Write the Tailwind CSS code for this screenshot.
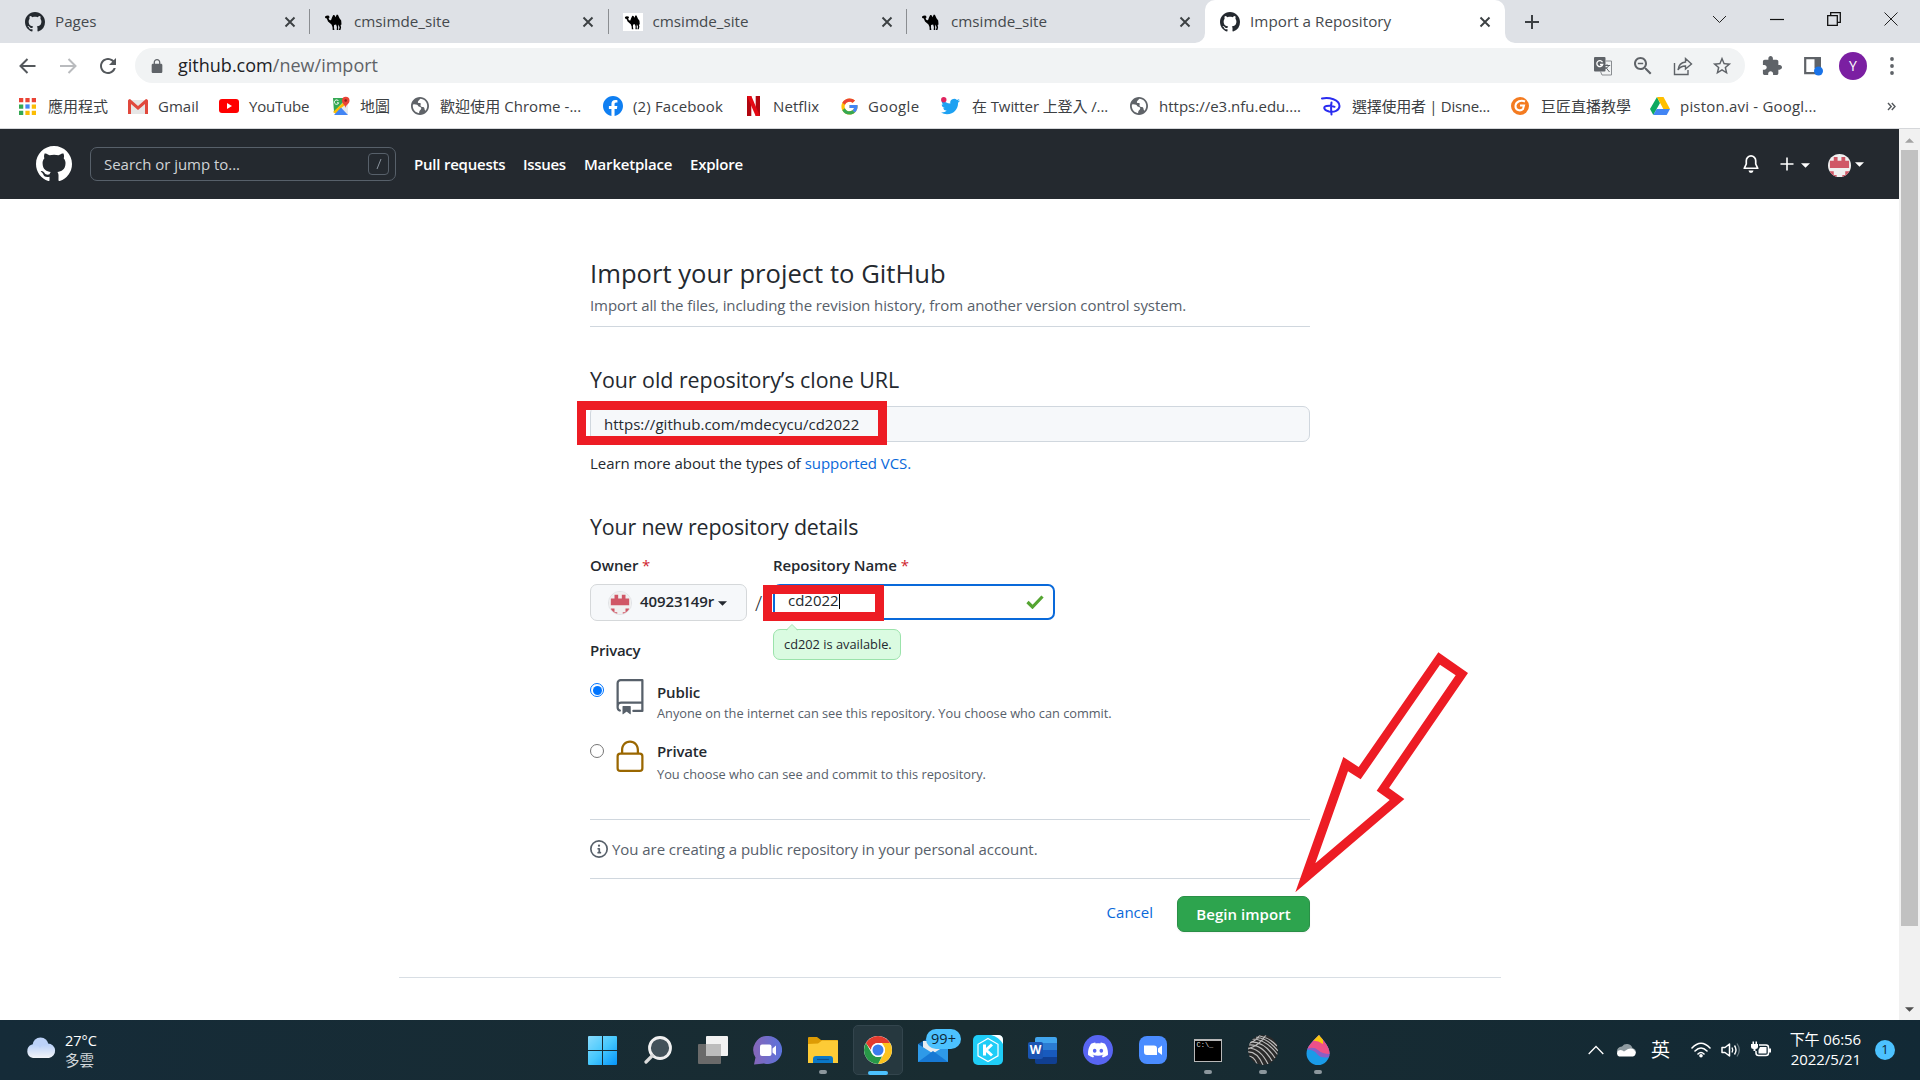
<!DOCTYPE html>
<html lang="zh-Hant">
<head>
<meta charset="utf-8">
<title>Import a Repository</title>
<script src="https://cdn.jsdelivr.net/npm/@tailwindcss/browser@4"></script>
</head>
<body class="relative h-[1080px] w-[1920px] overflow-hidden bg-white font-['Open_Sans','Noto_Sans_CJK_TC',sans-serif] text-[#24292f]">

<!-- Shared symbols -->
<svg class="hidden">
  <symbol id="mark" viewBox="0 0 16 16"><path fill="currentColor" d="M8 0C3.58 0 0 3.58 0 8c0 3.54 2.29 6.53 5.47 7.59.4.07.55-.17.55-.38 0-.19-.01-.82-.01-1.49-2.01.37-2.53-.49-2.69-.94-.09-.23-.48-.94-.82-1.13-.28-.15-.68-.52-.01-.53.63-.01 1.08.58 1.23.82.72 1.21 1.87.87 2.33.66.07-.52.28-.87.51-1.07-1.78-.2-3.64-.89-3.64-3.95 0-.87.31-1.59.82-2.15-.08-.2-.36-1.02.08-2.12 0 0 .67-.21 2.2.82.64-.18 1.32-.27 2-.27.68 0 1.36.09 2 .27 1.53-1.04 2.2-.82 2.2-.82.44 1.1.16 1.92.08 2.12.51.56.82 1.27.82 2.15 0 3.07-1.87 3.75-3.65 3.95.29.25.54.73.54 1.48 0 1.07-.01 1.93-.01 2.2 0 .21.15.46.55.38A8.013 8.013 0 0016 8c0-4.42-3.58-8-8-8z"/></symbol>
  <symbol id="x" viewBox="0 0 12 12"><path d="M1.5 1.5l9 9M10.5 1.5l-9 9" stroke="#3c4043" stroke-width="1.9" fill="none"/></symbol>
  <symbol id="camel" viewBox="0 0 20 20"><path fill="#000" d="M1 4.500l2-1 2 .3.600 1.600-1 .6.800 2 1.600.3L8 5.500l1.200-2.500 1.400.3 1 2 1-2.600 1.300.1 1.600 3.500 1.700 2.300.3 4-.9.500.5 2.300-.7 2.600h-1.500l.7-2.800-1.300-2.600-.2 2.700.2 2.700h-1.600l.2-3-.8-2.500-2 .4-.2 2.300.5 2.800H8.700l-.2-3-1-2.600L4 9.500 2.800 6.600 1.200 6z"/></symbol>
  <symbol id="globe" viewBox="2 2 20 20"><path fill="#5f6368" d="M12 2C6.480 2 2 6.480 2 12s4.480 10 10 10 10-4.480 10-10S17.520 2 12 2zm-1 17.930c-3.950-.49-7-3.850-7-7.930 0-.62.08-1.210.21-1.790L5.500 10c3 .1 4 .6 4.500 2 .4 1 2 .8 3 1.600.8.8.2 2-.6 2.800-.8.8-1.400 1.600-1.400 3.530zM20 12c0 2-.7 3.800-1.900 5.200-1.500-.7-.6-2.700-1.900-3.700-.9-.7-2.700-.3-3.400-1.300-.8-1.200.7-2.400-.3-3.200-.8-.6-1.900.2-2.700-.6-.9-1 .8-2.600 2.600-4.400C16.800 4.200 20 7.700 20 12z"/></symbol>
  <symbol id="identicon" viewBox="0 0 24 24"><rect width="24" height="24" fill="#f0f0f0"/><g fill="#d05766"><path d="M2 7h4V3h4v4h4V3h4v4h4v7.500H2z"/><path d="M2 18h4v4h3v3H2zM22 18h-4v4h-3v3h7z"/></g></symbol>
  <symbol id="caret" viewBox="0 0 10 5"><path fill="currentColor" d="M0 0h10L5 5z"/></symbol>
</svg>

<div class="flex h-full flex-col">

<!-- Tab strip -->
<div class="flex h-[43px] shrink-0 bg-[#dee1e6] pl-[11px] text-[15.2px] text-[#45494d]">
  <div class="flex w-[299px] items-center pl-3.5">
    <svg class="size-5 text-[#24292f]"><use href="#mark"/></svg>
    <span class="ml-2.5 w-[229px]">Pages</span><svg class="size-3"><use href="#x"/></svg>
    <i class="ml-auto h-[25px] w-px bg-[#8a8d91]"></i>
  </div>
  <div class="flex w-[298.5px] items-center pl-3.5">
    <svg class="size-5"><use href="#camel"/></svg>
    <span class="ml-2.5 w-[228px]">cmsimde_site</span><svg class="size-3"><use href="#x"/></svg>
    <i class="ml-auto h-[25px] w-px bg-[#8a8d91]"></i>
  </div>
  <div class="flex w-[298.5px] items-center pl-3.5">
    <svg class="h-[18px] w-5 bg-white"><use href="#camel"/></svg>
    <span class="ml-2.5 w-[228px]">cmsimde_site</span><svg class="size-3"><use href="#x"/></svg>
    <i class="ml-auto h-[25px] w-px bg-[#8a8d91]"></i>
  </div>
  <div class="flex w-[298px] items-center pl-3.5">
    <svg class="size-5"><use href="#camel"/></svg>
    <span class="ml-2.5 w-[228px]">cmsimde_site</span><svg class="size-3"><use href="#x"/></svg>
  </div>
  <div class="relative flex w-[300px] items-center rounded-t-[10px] bg-white pl-[15px]">
    <svg class="absolute bottom-0 -left-2.5 size-2.5"><path fill="#fff" d="M10 0v10H0A10 10 0 0010 0z"/></svg>
    <svg class="absolute -right-2.5 bottom-0 size-2.5"><path fill="#fff" d="M0 0v10h10A10 10 0 010 0z"/></svg>
    <svg class="size-5 text-[#24292f]"><use href="#mark"/></svg>
    <span class="ml-2.5 w-[229px] tracking-[0.04px]">Import a Repository</span><svg class="size-3"><use href="#x"/></svg>
  </div>
  <div class="flex flex-1 items-center pl-[19px]">
    <svg class="size-4" viewBox="0 0 16 16"><path d="M8 1v14M1 8h14" stroke="#3c4043" stroke-width="2"/></svg>
    <svg class="-mt-1.5 ml-[172px] h-3.5 w-[15px]" viewBox="0 0 15 14"><path d="M1 4l6.500 6.500L14 4" fill="none" stroke="#222"/></svg>
    <svg class="-mt-1.5 ml-[43px] size-3.5" viewBox="0 0 14 14"><path d="M0 7.500h14" stroke="#111" stroke-width="1.200"/></svg>
    <svg class="-mt-1.5 ml-[43px] size-3.5" viewBox="0 0 14 14"><path d="M.7 3.700h9.600v9.600H.7zM3.700 3.700v-3h9.600v9.600h-3" fill="none" stroke="#111" stroke-width="1.300"/></svg>
    <svg class="-mt-1.5 ml-[43px] size-3.5" viewBox="0 0 14 14"><path d="M.5.500l13 13M13.500.500l-13 13" stroke="#222"/></svg>
  </div>
</div>

<!-- Toolbar -->
<div class="flex h-[45px] shrink-0 items-center pl-[19px]">
  <svg class="h-4 w-[17px]" viewBox="0 0 17 16"><path d="M16.500 8H1.500M8.500 1L1.500 8l7 7" fill="none" stroke="#54585c" stroke-width="2"/></svg>
  <svg class="ml-6 h-4 w-[17px]" viewBox="0 0 17 16"><path d="M0 8h15.500M8.500 1l7 7-7 7" fill="none" stroke="#b9bbbe" stroke-width="2"/></svg>
  <svg class="ml-[19px] size-6" viewBox="0 0 24 24"><path fill="#54585c" d="M17.650 6.350C16.200 4.900 14.210 4 12 4c-4.420 0-7.990 3.580-7.990 8s3.570 8 7.990 8c3.730 0 6.840-2.550 7.730-6h-2.080c-.82 2.330-3.040 4-5.650 4-3.310 0-6-2.690-6-6s2.690-6 6-6c1.660 0 3.140.69 4.220 1.780L13 11h7V4l-2.350 2.350z"/></svg>
  <div class="ml-[15px] flex h-[35px] w-[1610px] items-center rounded-full bg-[#f1f3f4] pl-[15px]">
    <svg class="h-3.5 w-3.5" viewBox="2 1 20 21"><path fill="#5f6368" fill-rule="evenodd" d="M18 8h-1V6c0-2.760-2.240-5-5-5S7 3.240 7 6v2H6c-1.100 0-2 .9-2 2v10c0 1.100.9 2 2 2h12c1.100 0 2-.9 2-2V10c0-1.100-.9-2-2-2zM15.100 8H8.900V6c0-1.710 1.390-3.100 3.100-3.100s3.100 1.390 3.100 3.100v2z"/></svg>
    <span class="ml-3.5 w-[1415px] text-[18px] tracking-[0.01px] text-[#5f6368]"><span class="text-[#202124]">github.com</span>/new/import</span>
    <svg class="size-5" viewBox="0 0 20 20"><rect x="1" y="1" width="11.500" height="14.500" rx="1" fill="#5f6368"/><path d="M12.500 5H18.500v14H9l-1.500-3.500" fill="none" stroke="#8a8d91"/><path d="M9.500 6.200A3 3 0 109.700 8.500H7" fill="none" stroke="#fff" stroke-width="1.300"/><path d="M10.800 9.500h6.400M14 8.200v1.300M12 12.500q3-.5 3.800-3M12.500 11l4 5" fill="none" stroke="#5f6368"/></svg>
    <svg class="ml-[18px] size-6" viewBox="0 0 24 24"><path fill="#5f6368" d="M15.500 14h-.79l-.28-.27C15.410 12.590 16 11.110 16 9.500 16 5.910 13.090 3 9.500 3S3 5.910 3 9.500 5.910 16 9.500 16c1.610 0 3.090-.59 4.230-1.570l.27.28v.79l5 4.990L20.490 19l-4.990-5zm-6 0C7.010 14 5 11.990 5 9.500S7.010 5 9.500 5 14 7.010 14 9.500 11.990 14 9.500 14zM6.800 8.700h5.400v1.500H6.800z"/></svg>
    <svg class="ml-[18px] size-5" viewBox="0 0 20 20"><path d="M1.500 7v11.500h13.500V14M12.500 2.500l6 5.500-6 5V10c-4 0-6 1.300-7.500 4 .5-4.500 3-7.500 7.500-8z" fill="none" stroke="#5f6368" stroke-width="1.400"/></svg>
    <svg class="ml-[18px] size-[22px]" viewBox="0 0 24 24"><path fill="#5f6368" d="M22 9.240l-7.190-.62L12 2 9.190 8.630 2 9.240l5.460 4.730L5.820 21 12 17.270 18.180 21l-1.630-7.030L22 9.240zM12 15.400l-3.760 2.270 1-4.280-3.320-2.880 4.380-.38L12 6.100l1.710 4.040 4.380.38-3.320 2.880 1 4.280L12 15.400z"/></svg>
  </div>
  <svg class="ml-[17px] size-5" viewBox="1 1 22 22"><path fill="#5f6368" d="M20.500 11H19V7c0-1.100-.9-2-2-2h-4V3.500C13 2.120 11.880 1 10.500 1S8 2.120 8 3.500V5H4c-1.100 0-1.990.9-1.990 2v3.800H3.500c1.490 0 2.700 1.210 2.700 2.700s-1.210 2.700-2.700 2.700H2V20c0 1.100.9 2 2 2h3.800v-1.500c0-1.490 1.210-2.700 2.700-2.700 1.490 0 2.700 1.210 2.700 2.700V22H17c1.100 0 2-.9 2-2v-4h1.500c1.380 0 2.500-1.120 2.500-2.500S21.880 11 20.500 11z"/></svg>
  <svg class="ml-[21px] size-5" viewBox="0 0 20 20"><path d="M2.200 2.200h14.600v15H2.200z" fill="none" stroke="#5f6368" stroke-width="2.200"/><path d="M11.500 1.500H18v11h-6.500z" fill="#5f6368"/><circle cx="15.500" cy="15" r="4.500" fill="#1a73e8"/></svg>
  <div class="ml-4 flex size-7 items-center justify-center rounded-full bg-[#7b1fa2] text-sm text-white">Y</div>
  <svg class="ml-[22px] h-5 w-1.5" viewBox="0 0 6 20"><g fill="#5f6368"><circle cx="3" cy="3" r="1.900"/><circle cx="3" cy="10" r="1.900"/><circle cx="3" cy="17" r="1.900"/></g></svg>
</div>

<!-- Bookmarks bar -->
<div class="flex h-[41px] shrink-0 items-center border-b border-[#d5d7da] pb-1 pl-[19px] text-[15px] whitespace-nowrap text-[#3c4043]">
  <div class="flex w-[109px] items-center gap-3">
    <svg class="size-[17px]" viewBox="0 0 16 16"><path fill="#ea4335" d="M0 0h4v4H0zM6 0h4v4H6zM12 0h4v4h-4z"/><path fill="#34a853" d="M0 6h4v4H0zM0 12h4v4H0z"/><path fill="#4285f4" d="M6 6h4v4H6z"/><path fill="#fbbc04" d="M12 6h4v4h-4zM12 12h4v4h-4zM6 12h4v4H6z"/></svg>
    <span>應用程式</span></div>
  <div class="flex w-[91px] items-center gap-2.5">
    <svg class="h-[15px] w-5" viewBox="0 0 20 15"><path fill="#e6e6e6" d="M2 1h16v14H2z"/><path fill="#e0483c" d="M0 1.500Q.5 0 2 0l8 7 8-7q1.500 0 2 1.500V15h-3V5l-7 6-7-6v10H0z"/></svg>
    <span>Gmail</span></div>
  <div class="flex w-28 items-center gap-2.5">
    <svg class="h-3.5 w-5" viewBox="0 0 20 14"><rect width="20" height="14" rx="3" fill="#f00"/><path fill="#fff" d="M8 4l5 3-5 3z"/></svg>
    <span class="tracking-[-0.2px]">YouTube</span></div>
  <div class="flex w-20 items-center gap-[9px]">
    <svg class="size-5" viewBox="0 0 20 20"><path fill="#34a853" d="M2 2h14L3 16z"/><path fill="#fbbc04" d="M16 3l1 4L5 18l-3-2z"/><path fill="#e8eaed" d="M17 7v12L10 12z"/><path fill="#4285f4" d="M10 11.500l7 7.500H3z"/><path fill="#ea4335" d="M14.500 12C14 8.500 11 8 11 4.500a3.700 3.700 0 017.500 0c0 3.500-3.500 4-4 7.500z"/><circle cx="14.700" cy="4.500" r="1.300" fill="#8c1d18"/><path d="M7.500 5A2.200 2.200 0 107.700 6.800H6" fill="none" stroke="#fff"/></svg>
    <span>地圖</span></div>
  <div class="flex w-48 items-center gap-[11px]">
    <svg class="size-[18px]"><use href="#globe"/></svg><span class="tracking-[0.05px]">歡迎使用 Chrome -...</span></div>
  <div class="flex w-[144px] items-center gap-2.5">
    <svg class="size-5" viewBox="0 0 24 24"><circle cx="12" cy="12" r="11.500" fill="#fff"/><path fill="#0f7ff2" d="M24 12.073c0-6.627-5.373-12-12-12s-12 5.373-12 12c0 5.990 4.388 10.954 10.125 11.854v-8.385H7.078v-3.470h3.047V9.430c0-3.007 1.792-4.669 4.533-4.669 1.312 0 2.686.235 2.686.235v2.953H15.830c-1.491 0-1.956.925-1.956 1.874v2.250h3.328l-.532 3.470h-2.796v8.385C19.612 23.027 24 18.062 24 12.073z"/></svg>
    <span class="tracking-[0.15px]">(2) Facebook</span></div>
  <div class="flex w-[94px] items-center gap-[13px]">
    <svg class="h-5 w-[13px]" viewBox="0 0 13 20"><path fill="#b1060f" d="M0 0h4.300v20H0zM8.700 0H13v20H8.700z"/><path fill="#e50914" d="M0 0h4.300L13 20H8.700z"/></svg>
    <span class="tracking-[0.1px]">Netflix</span></div>
  <div class="flex w-[100px] items-center gap-2.5">
    <svg class="size-[17px]" viewBox="3 3 42 42"><path fill="#FFC107" d="M43.611,20.083H42V20H24v8h11.303c-1.649,4.657-6.080,8-11.303,8c-6.627,0-12-5.373-12-12c0-6.627,5.373-12,12-12c3.059,0,5.842,1.154,7.961,3.039l5.657-5.657C34.046,6.053,29.268,4,24,4C12.955,4,4,12.955,4,24c0,11.045,8.955,20,20,20c11.045,0,20-8.955,20-20C44,22.659,43.862,21.350,43.611,20.083z"/><path fill="#ea4335" d="M6.306,14.691l6.571,4.819C14.655,15.108,18.961,12,24,12c3.059,0,5.842,1.154,7.961,3.039l5.657-5.657C34.046,6.053,29.268,4,24,4C16.318,4,9.656,8.337,6.306,14.691z"/><path fill="#34a853" d="M24,44c5.166,0,9.860-1.977,13.409-5.192l-6.190-5.238C29.211,35.091,26.715,36,24,36c-5.202,0-9.619-3.317-11.283-7.946l-6.522,5.025C9.505,39.556,16.227,44,24,44z"/><path fill="#4285f4" d="M43.611,20.083H42V20H24v8h11.303c-0.792,2.237-2.231,4.166-4.087,5.571l6.193,5.236C36.971,39.205,44,34,44,24C44,22.659,43.862,21.350,43.611,20.083z"/></svg>
    <span class="tracking-[0.35px]">Google</span></div>
  <div class="flex w-[189px] items-center gap-3">
    <svg class="h-[19px] w-[19px]" viewBox="0 0 24 24"><path fill="#1da1f2" d="M23.953 4.570a10 10 0 01-2.825.775 4.958 4.958 0 002.163-2.723c-.951.555-2.005.959-3.127 1.184a4.920 4.920 0 00-8.384 4.482C7.690 8.095 4.067 6.130 1.640 3.162a4.822 4.822 0 00-.666 2.475c0 1.710.87 3.213 2.188 4.096a4.904 4.904 0 01-2.228-.616v.06a4.923 4.923 0 003.946 4.827 4.996 4.996 0 01-2.212.085 4.936 4.936 0 004.604 3.417 9.867 9.867 0 01-6.102 2.105c-.39 0-.779-.023-1.170-.067a13.995 13.995 0 007.557 2.209c9.053 0 13.998-7.496 13.998-13.985 0-.21 0-.42-.015-.63A9.935 9.935 0 0024 4.590z"/><circle cx="3.500" cy="3.500" r="3.400" fill="#e0245e"/></svg>
    <span class="tracking-[-0.1px]">在 Twitter 上登入 /...</span></div>
  <div class="flex w-[191px] items-center gap-[11px]">
    <svg class="size-[18px]"><use href="#globe"/></svg><span>https://e3.nfu.edu....</span></div>
  <div class="flex w-[189px] items-center gap-[11px]">
    <svg class="size-5" viewBox="0 0 20 20"><path d="M1 2.500C8 1 18.500 3.500 18.500 10 18.500 14.500 13 16.500 8 15.500 2.500 14 2 10.800 5.500 10q4-1 8 .8M10.500 6.500q-.8 5 0 12" fill="none" stroke="#2a2cf0" stroke-width="2" stroke-linecap="round"/></svg>
    <span class="tracking-[-0.28px]">選擇使用者 | Disne...</span></div>
  <div class="flex w-[140px] items-center gap-[11px]">
    <svg class="size-5" viewBox="0 0 20 20"><ellipse cx="10" cy="10" rx="9" ry="9" fill="#f47b20"/><path d="M15 5.500c-4-2-9 0-9.500 4-.5 5 5 6 7.500 3.500l1-3.500H10" fill="none" stroke="#fff" stroke-width="2"/></svg>
    <span>巨匠直播教學</span></div>
  <div class="flex w-[237px] items-center gap-2.5">
    <svg class="h-[18px] w-5" viewBox="0 0 20 18"><path fill="#0da960" d="M7 0L0 12l3.300 6L10 6z"/><path fill="#ffbf00" d="M7 0h6.500L20 12h-6.700z"/><path fill="#4285f4" d="M3.300 18L6.600 12H20l-3.300 6z"/></svg>
    <span class="tracking-[0.2px]">piston.avi - Googl...</span></div>
  <svg class="size-[9px] self-center" viewBox="0 0 9 9"><path d="M1 1l3.200 3.500L1 8M4.800 1L8 4.500 4.800 8" fill="none" stroke="#54585c" stroke-width="1.400"/></svg>
</div>

<!-- Web page viewport -->
<div class="flex h-[891px] shrink-0">
 <div class="w-[1899px]">
  <header class="flex h-[70px] items-center bg-[#24292f] pl-9 text-[15px] font-semibold text-white">
    <svg class="size-9"><use href="#mark"/></svg>
    <div class="ml-[18px] flex h-[34px] w-[306px] items-center justify-between rounded-[7px] border border-[#57606a] pr-1.5 pl-[13px] font-normal tracking-[-0.03px] text-[#d0d3d6]">Search or jump to...
      <span class="flex h-[22px] w-[21px] items-center justify-center rounded-[4px] border border-[#57606a]"><svg class="h-3 w-2" viewBox="0 0 8 12"><path d="M2 11L6 1" stroke="#8b949e"/></svg></span>
    </div>
    <nav class="flex pl-[18px] whitespace-nowrap">
      <a class="w-[109px] tracking-[-0.22px]">Pull requests</a><a class="w-[61px] tracking-[-0.3px]">Issues</a><a class="w-[106px] tracking-[-0.2px]">Marketplace</a><a class="tracking-[-0.2px]">Explore</a>
    </nav>
    <svg class="ml-auto size-[18px]" viewBox="0 0 16 16"><path d="M8 .8A4.200 4.200 0 003.800 5v3L2 11.800h12L12.200 8V5A4.200 4.200 0 008 .8z" fill="none" stroke="#fff" stroke-width="1.500" stroke-linejoin="round"/><path d="M5.800 13.800h4.400a2.200 2.200 0 01-4.400 0z" fill="#fff"/></svg>
    <svg class="ml-5 size-3.5" viewBox="0 0 14 14"><path d="M7 .5v13M.5 7h13" stroke="#fff" stroke-width="1.600"/></svg>
    <svg class="mt-0.5 ml-[7px] h-[5px] w-[9px]"><use href="#caret"/></svg>
    <svg class="mt-0.5 ml-[18px] size-[23px] rounded-full"><use href="#identicon"/></svg>
    <svg class="mr-[35px] ml-1 h-[5px] w-[9px]"><use href="#caret"/></svg>
  </header>

  <main class="ml-[590px] w-[720px] pt-[55px] text-[15px] whitespace-nowrap">
    <h1 class="h-10 text-[25.6px] leading-10 tracking-[0.02px]">Import your project to GitHub</h1>
    <p class="h-8 border-b border-[#d0d7de] leading-[22px] tracking-[-0.075px] text-[#57606a] box-content">Import all the files, including the revision history, from another version control system.</p>

    <h2 class="mt-[38px] h-[30px] text-[21.4px] leading-[30px] tracking-[-0.03px]">Your old repository’s clone URL</h2>
    <div class="mt-[11px] flex h-9 items-center rounded-[7px] border border-[#d0d7de] bg-[#f6f8fa] pl-[13px] tracking-[0.03px]">https://github.com/mdecycu/cd2022</div>
    <p class="mt-2.5 h-[23px] leading-[22px] tracking-[-0.06px]">Learn more about the types of <a class="text-[#0969da]">supported VCS.</a></p>

    <h2 class="mt-[37px] h-[30px] text-[21.4px] leading-[30px] tracking-[-0.17px]">Your new repository details</h2>
    <div class="mt-3 flex h-[22px] leading-[22px] font-semibold tracking-[-0.08px]">
      <span class="w-[183px]">Owner <span class="font-normal text-[#cf222e]">*</span></span>
      <span>Repository Name <span class="font-normal text-[#cf222e]">*</span></span>
    </div>
    <div class="mt-2 flex h-[37px]">
      <div class="flex h-full w-[157px] items-center rounded-[7px] border border-[#d5d8da] bg-[#f6f8fa] pl-[17px] font-semibold">
        <svg class="mr-2 size-6 rounded-full border border-[#dfe1e4]"><use href="#identicon"/></svg><span class="-mt-0.5 tracking-[-0.1px]">40923149r</span>
        <svg class="mt-0.5 ml-1 h-[5px] w-[9px]"><use href="#caret"/></svg>
      </div>
      <span class="mt-1 ml-2 w-[18px] text-[21px] font-light">/</span>
      <div class="relative flex h-9 w-[282px] items-center rounded-[7px] border-2 border-[#0969da] bg-white pr-[9px] pl-[13px]">
        <span class="-mt-1 border-r border-black leading-[18px]">cd2022</span>
        <svg class="ml-auto h-3.5 w-[18px]" viewBox="0 0 18 14"><path d="M1.500 7l5 5L16.500 1.500" fill="none" stroke="#55a532" stroke-width="3.200"/></svg>
        <div class="absolute top-[43px] -left-[2px] flex h-[31px] w-32 items-center rounded-[7px] border border-[#9be3ab] bg-[#dafbe1] pl-2.5 text-[12.8px]">
          <svg class="absolute -top-1.5 left-3 h-[7px] w-3" viewBox="0 0 12 7"><path d="M0 7l6-6 6 6z" fill="#dafbe1"/><path d="M0 6.500L6 .5l6 6" fill="none" stroke="#9be3ab"/></svg>cd202 is available.</div>
      </div>
    </div>
    <p class="mt-[18px] h-[23px] leading-[22px] font-semibold tracking-[-0.25px]">Privacy</p>

    <div class="mt-[17px] flex h-[60px]">
      <i class="mt-1 mr-2 flex size-3.5 items-center justify-center rounded-full border border-[#0075ff]"><i class="size-[9px] rounded-full bg-[#0075ff]"></i></i>
      <svg class="size-9" viewBox="0 0 24 24"><path fill="#57606a" fill-rule="evenodd" d="M3 2.750A2.750 2.750 0 015.750 0h14.500a.75.750 0 01.75.750v20.500a.75.750 0 01-.75.750h-6a.75.750 0 010-1.500h5.250v-4H6A1.500 1.500 0 004.500 18v.75c0 .716.430 1.334 1.050 1.605a.75.750 0 01-.6 1.374A3.250 3.250 0 013 18.750v-16zM19.500 1.500V15H6c-.546 0-1.059.146-1.500.401V2.750c0-.69.560-1.250 1.250-1.250H19.500z"/><path fill="#57606a" d="M7 18.250a.25.250 0 01.25-.25h5a.25.250 0 01.25.25v5.010a.25.250 0 01-.397.201l-2.206-1.604a.25.250 0 00-.294 0L7.397 23.460a.25.250 0 01-.397-.2v-5.010z"/></svg>
      <div class="ml-[9px] pt-0.5"><p class="font-semibold leading-[22px] tracking-[-0.15px]">Public</p><p class="text-[12.8px] leading-[21px] tracking-[-0.02px] text-[#57606a]">Anyone on the internet can see this repository. You choose who can commit.</p></div>
    </div>
    <div class="flex h-[60px]">
      <i class="mt-[5px] mr-2 size-3.5 rounded-full border border-[#767676] bg-white"></i>
      <svg class="size-9" viewBox="0 0 24 24"><path fill="#9a6700" fill-rule="evenodd" d="M6 9V7.250C6 3.845 8.503 1 12 1s6 2.845 6 6.250V9h.5a2.500 2.500 0 012.500 2.500v8a2.500 2.500 0 01-2.500 2.500h-13A2.500 2.500 0 013 19.500v-8A2.500 2.500 0 015.500 9H6zm1.500-1.750C7.500 4.580 9.422 2.500 12 2.500c2.578 0 4.500 2.080 4.500 4.750V9h-9V7.250zm-3 4.250a1 1 0 011-1h13a1 1 0 011 1v8a1 1 0 01-1 1h-13a1 1 0 01-1-1v-8z"/></svg>
      <div class="ml-[9px] pt-px"><p class="h-[23px] font-semibold leading-[22px] tracking-[-0.15px]">Private</p><p class="text-[12.8px] leading-[22px] text-[#57606a]">You choose who can see and commit to this repository.</p></div>
    </div>

    <div class="mt-5 flex h-[60px] items-center gap-1 border-y border-[#d0d7de] tracking-[-0.055px] text-[#57606a]">
      <svg class="size-[18px]" viewBox="0 0 16 16"><path fill="#57606a" fill-rule="evenodd" d="M8 1.500a6.500 6.500 0 100 13 6.500 6.500 0 000-13zM0 8a8 8 0 1116 0A8 8 0 010 8zm6.500-.25A.75.750 0 017.250 7h1a.75.750 0 01.75.750v2.750h.25a.75.750 0 010 1.500h-2a.75.750 0 010-1.500h.25v-2h-.25a.75.750 0 01-.75-.75zM8 6a1 1 0 100-2 1 1 0 000 2z"/></svg>
      You are creating a public repository in your personal account.</div>
    <div class="mt-[17px] flex h-9 items-center justify-end font-semibold">
      <a class="-mt-1 mr-6 font-medium text-[#0969da]">Cancel</a>
      <div class="flex h-9 w-[133px] items-center justify-center rounded-[7px] border border-[#2a8f47] bg-[#2da44e] tracking-[0.05px] text-white shadow-xs">Begin import</div>
    </div>
  </main>
  <hr class="mt-[45px] ml-[399px] w-[1102px] border-[#d8dee4]">
 </div>
 <!-- Scrollbar -->
 <div class="flex w-[21px] flex-col items-center bg-[#f1f1f1]">
   <svg class="mt-[9px] h-[5px] w-[9px] rotate-180 text-[#a3a3a3]"><use href="#caret"/></svg>
   <div class="mt-[7px] h-[776px] w-[17px] bg-[#c1c1c1]"></div>
   <svg class="mt-auto mb-2 h-[5px] w-[9px] text-[#505050]"><use href="#caret"/></svg>
 </div>
</div>

<!-- Taskbar -->
<div class="flex h-[60px] shrink-0 items-center bg-linear-to-r from-[#152b38] via-[#192c31] to-[#122935] whitespace-nowrap text-white">
  <div class="flex w-[575px] items-center pl-[26px]">
    <svg class="-mt-1 h-[22px] w-[30px]" viewBox="0 0 30 22"><defs><linearGradient id="cl" x1="0" y1="0" x2="0" y2="1"><stop stop-color="#b6cff8"/><stop offset="1" stop-color="#f2f4f8"/></linearGradient></defs><circle cx="14.500" cy="8.500" r="8" fill="#bcd2f8"/><path fill="url(#cl)" d="M7 21a7 7 0 01-1-13.500Q11 6.500 14 11q3-5 8-4.500a7.300 7.300 0 011 14.500z"/></svg>
    <div class="mt-0.5 ml-[9px] text-[14.500px] leading-5"><p>27°C</p><p class="text-[#d3d8db]">多雲</p></div>
  </div>
  <div class="flex">
    <div class="flex h-[50px] w-[55px] items-center justify-center"><svg class="size-[29px]" viewBox="0 0 29 29"><defs><linearGradient id="wn" x1="0" y1="0" x2="1" y2="1"><stop stop-color="#89dcfd"/><stop offset=".5" stop-color="#46c8fd"/><stop offset="1" stop-color="#0595f9"/></linearGradient></defs><path fill="url(#wn)" d="M0 1q0-1 1-1h13v14H0zM15 0h13q1 0 1 1v13H15zM0 15h14v14H1q-1 0-1-1zM15 15h14v13q0 1-1 1H15z"/></svg></div>
    <div class="flex h-[50px] w-[55px] items-center justify-center"><svg class="size-7" viewBox="0 0 28 28"><circle cx="16" cy="12" r="10.500" fill="#43525a" stroke="#f0f0f0" stroke-width="2.800"/><path d="M8.500 19.500L2 26" stroke="#dcdcdc" stroke-width="3.200" stroke-linecap="round"/></svg></div>
    <div class="flex h-[50px] w-[55px] items-center justify-center"><svg class="h-7 w-[30px]" viewBox="0 0 30 28"><rect x="0" y="8" width="23" height="20" rx="1" fill="#6a6a6a"/><rect x="8" y="0" width="22" height="20" rx="1" fill="#f2f2f2"/><path d="M8 8h15v12H8z" fill="#bdbdbd"/></svg></div>
    <div class="flex h-[50px] w-[55px] items-center justify-center"><svg class="size-[29px]" viewBox="0 0 29 29"><defs><linearGradient id="tm" x1="0" x2="1"><stop stop-color="#8666b8"/><stop offset="1" stop-color="#5b73dc"/></linearGradient></defs><path fill="url(#tm)" d="M15 0a14 14 0 11-4 27.400L1 28.500l1.500-7A14 14 0 0115 0z"/><rect x="7" y="8.500" width="11.500" height="11.500" rx="2" fill="#fff"/><path fill="#fff" d="M19.500 12.500L23 9.500v10l-3.500-3z"/></svg></div>
    <div class="relative flex h-[50px] w-[55px] items-center justify-center"><svg class="h-7 w-[30px]" viewBox="0 0 30 28"><path fill="#dd9b04" d="M0 2q0-1 1-1h8l4 3h16q1 0 1 1v5H0z"/><path fill="#fdcb36" d="M0 8l10-.5 4-3h16V27H0z"/><path fill="#0a78c8" d="M5 27v-4q0-3 3-3h14q3 0 3 3v4z"/><path d="M9 23.500h12" stroke="#0b4f8f" stroke-width="1.200"/></svg><i class="absolute bottom-px h-1 w-2 rounded-full bg-[#8c979d]"></i></div>
    <div class="relative mx-[2.5px] flex h-[50px] w-[50px] items-center justify-center rounded-[5px] border border-[#33454d] bg-[#26383f]"><svg class="size-7" viewBox="0 0 28 28"><circle cx="14" cy="14" r="14" fill="#fff"/><path fill="#e33b2e" d="M1.880 7A14 14 0 0126.120 7H14a7 7 0 00-6.060 3.500L7 14z"/><path fill="#fcc31e" d="M26.120 7A14 14 0 0114 28l6.060-10.500A7 7 0 0020.060 10.500L18 7z"/><path fill="#279847" d="M14 28A14 14 0 011.880 7l6.060 10.500A7 7 0 0014 21l4-.5z"/><circle cx="14" cy="14" r="7" fill="#fff"/><circle cx="14" cy="14" r="5.500" fill="#3b7ded"/></svg><i class="absolute -bottom-px h-1 w-5 rounded-full bg-[#4cc2ff]"></i></div>
    <div class="relative flex h-[50px] w-[55px] items-center justify-center"><svg class="h-6 w-[30px]" viewBox="0 0 30 24"><path fill="#0f5fa8" d="M0 6L15-3 30 6v8H0z"/><path fill="#e9edf0" d="M5 3h20v9l-10 6L5 12z"/><path fill="#2e9ae8" d="M0 6l15 9.500L30 6v18H0z"/><path fill="#1779d4" d="M0 24L15 13l15 11z"/></svg><span class="absolute top-1 left-[21px] flex h-5 w-[35px] items-center justify-center rounded-full bg-[#4cc2ff] text-[14.500px] text-[#0c2738]">99+</span></div>
    <div class="flex h-[50px] w-[55px] items-center justify-center"><svg class="size-[30px]" viewBox="0 0 30 30"><rect width="30" height="30" rx="5" fill="#1fcdf7"/><path fill="#fff" d="M18 0h7q5 0 5 5v4q-4-7-12-9z"/><path d="M15 3.500l10 5.800v11.500l-10 5.800-10-5.800V9.300z" fill="none" stroke="#fff" stroke-width="1.200"/><path d="M11.500 9.500v11M19 9.500L13 15l6 5.500" fill="none" stroke="#fff" stroke-width="3"/></svg></div>
    <div class="flex h-[50px] w-[55px] items-center justify-center"><div class="relative flex h-[27px] w-[29px] justify-end"><div class="flex w-[22px] flex-col overflow-hidden rounded-[2px]"><i class="flex-1 bg-[#41a5ee]"></i><i class="flex-1 bg-[#2b7cd3]"></i><i class="flex-1 bg-[#185abd]"></i><i class="flex-1 bg-[#103f91]"></i></div><span class="absolute top-[5px] left-0 flex h-[17px] w-[15px] items-center justify-center rounded-[2px] bg-[#1a55b3] text-[12px] font-bold">W</span></div></div>
    <div class="flex h-[50px] w-[55px] items-center justify-center"><div class="flex size-[30px] items-center justify-center rounded-full bg-[#5865f2]"><svg class="size-5" viewBox="0 0 24 24"><path fill="#fff" d="M20.317 4.370a19.791 19.791 0 00-4.885-1.515.074.074 0 00-.079.037c-.211.375-.445.865-.608 1.250-1.845-.276-3.680-.276-5.487 0-.164-.393-.406-.874-.618-1.250a.077.077 0 00-.079-.037 19.736 19.736 0 00-4.885 1.515.070.070 0 00-.032.028C.533 9.046-.319 13.580.099 18.058a.082.082 0 00.031.056c2.053 1.508 4.041 2.423 5.993 3.029a.078.078 0 00.084-.028c.462-.630.873-1.295 1.226-1.994a.076.076 0 00-.042-.106c-.653-.248-1.274-.550-1.872-.892a.077.077 0 01-.008-.128c.126-.094.252-.192.372-.291a.074.074 0 01.078-.011c3.928 1.793 8.180 1.793 12.061 0a.074.074 0 01.079.010c.120.099.246.198.373.292a.077.077 0 01-.007.128 12.299 12.299 0 01-1.873.891.077.077 0 00-.041.107c.360.698.772 1.363 1.225 1.993a.076.076 0 00.084.029c1.961-.607 3.950-1.522 6.002-3.029a.077.077 0 00.031-.055c.500-5.177-.838-9.674-3.549-13.660a.061.061 0 00-.031-.029zM8.020 15.331c-1.183 0-2.157-1.086-2.157-2.419s.956-2.419 2.157-2.419c1.211 0 2.176 1.095 2.157 2.419 0 1.333-.956 2.419-2.157 2.419zm7.975 0c-1.183 0-2.157-1.086-2.157-2.419s.955-2.419 2.157-2.419c1.211 0 2.176 1.095 2.157 2.419 0 1.333-.946 2.419-2.157 2.419z"/></svg></div></div>
    <div class="flex h-[50px] w-[55px] items-center justify-center"><svg class="size-7" viewBox="0 0 28 28"><rect width="28" height="28" rx="8" fill="#4a8cff"/><path fill="#fff" d="M5 9.500h10q3 0 3 3v6.500H8q-3 0-3-3zM19 12.500l4-3v9.500l-4-3z"/></svg></div>
    <div class="relative flex h-[50px] w-[55px] items-center justify-center"><div class="h-[23px] w-7 overflow-hidden border border-t-2 border-[#b8b8b8] bg-black pl-0.5 font-['Liberation_Mono',monospace] text-[7px] leading-[9px] text-[#ddd]">C:\_</div><i class="absolute bottom-px h-1 w-2 rounded-full bg-[#8c979d]"></i></div>
    <div class="relative flex h-[50px] w-[55px] items-center justify-center"><svg class="size-[30px] rounded-full" viewBox="0 0 30 30"><rect width="30" height="30" fill="#2a2a2a"/><g fill="none" stroke="#bcbcbc" stroke-width="1.200"><path d="M12 1q10 2 17 10M8 2q13 2 22 14M4 4q14 0 26 16M2 7q14-1 25 16M1 10q13-1 23 16M0 13q12 0 20 16M-1 17q10-1 16 13M0 21q6 0 9 8M0 9q8-3 12-9M0 14q12-4 18-14"/></g></svg><i class="absolute bottom-px h-1 w-2 rounded-full bg-[#8c979d]"></i></div>
    <div class="relative flex h-[50px] w-[55px] items-center justify-center"><svg class="h-[30px] w-6" viewBox="0 0 24 30"><clipPath id="dr"><path d="M13 0c3 4 10.500 11 10.500 18.500A11.500 11.500 0 01.5 18.500C.5 12 7 6 13 0z"/></clipPath><g clip-path="url(#dr)"><rect width="24" height="30" fill="#1a9be8"/><path fill="#8a5fc6" d="M0 15q7-1 11 4t13 3V5H0z"/><path fill="#ee5089" d="M0 14q8-3 12 1t12 4V0H0z"/><path fill="#f9c80e" d="M6 6q5-1 11 3V0H6z"/></g></svg><i class="absolute bottom-px h-1 w-2 rounded-full bg-[#8c979d]"></i></div>
  </div>
  <svg class="ml-[243px] h-2.5 w-4" viewBox="0 0 16 10"><path d="M.7 9L8 1.500 15.300 9" fill="none" stroke="#fff" stroke-width="1.300"/></svg>
  <svg class="ml-3 h-3.5 w-5" viewBox="0 0 20 14"><path fill="#8f9ba1" d="M1 9.500A5 5 0 016 3.500 6 6 0 0116.500 5 5 5 0 0120 10z"/><path fill="#fff" d="M3 13.500A3.500 3.500 0 012.500 7.500Q5.500 6 8 8.500L12 6q5-1.500 7 2a3.500 3.500 0 01-2 5.500z"/></svg>
  <span class="ml-[15px] w-5 text-[19px]">英</span>
  <svg class="ml-5 h-4 w-5" viewBox="0 0 20 16"><g fill="none" stroke="#fff" stroke-width="1.600" stroke-linecap="round"><path d="M1 6q9-9.500 18 0M4 9q6-6 12 0M7 12q3-3 6 0"/></g><circle cx="10" cy="13.700" r="1.800" fill="#fff"/></svg>
  <svg class="ml-2.5 h-[18px] w-5" viewBox="0 0 20 18"><path d="M1 6.500h3L8.500 3v12L4 11.500H1z" fill="none" stroke="#fff" stroke-width="1.500" stroke-linejoin="round"/><path d="M11 6.500q1.500 2.500 0 5M13.500 4.500q3 4.500 0 9" fill="none" stroke="#fff" stroke-width="1.400"/><path d="M16 2.500q4.500 6.500 0 13" fill="none" stroke="#65767e" stroke-width="1.300"/></svg>
  <svg class="ml-2.5 h-[18px] w-5" viewBox="0 0 20 18"><path d="M8 4h7q2.500 0 2.500 2.500v5.500q0 2.500-2.500 2.500H7.500q-2.500 0-2.500-2.500v-2" fill="none" stroke="#fff" stroke-width="1.500"/><path fill="#fff" d="M9 6h6.500v6.500H7.500V9zM18 7.500h2v4h-2zM0 3h1.500V.5H3V3h1.500V.5H6V3h1v3q0 2-2.500 2v2h-2V8Q0 8 0 6z"/></svg>
  <div class="-mt-0.5 ml-3.5 w-[76px] text-right text-[15px] leading-5 tracking-[-0.1px]"><p>下午 06:56</p><p>2022/5/21</p></div>
  <span class="ml-3.5 flex size-5 items-center justify-center rounded-full bg-[#4cc2ff] text-[13px] text-[#0c2738]">1</span>
</div>
</div>

<!-- Red annotations over the page -->
<div class="absolute top-[401px] left-[577px] h-11 w-[310px] border-9 border-[#ed1c24]"></div>
<div class="absolute top-[585px] left-[763px] h-9 w-[121px] border-9 border-[#ed1c24]"></div>
<svg class="absolute top-[630px] left-[1260px] h-[280px] w-60" viewBox="0 0 720 840"><path fill="#fff" d="M540 104L587 136 350 482 389 510 166 700 264 424 302 448z"/><path fill="#ed1c24" fill-rule="evenodd" d="M535 67L624 129 387 474 433 507 106 787 250 381 296 411zM540 104L302 448 264 424 166 700 389 510 350 482 587 136z"/></svg>
</body>
</html>
